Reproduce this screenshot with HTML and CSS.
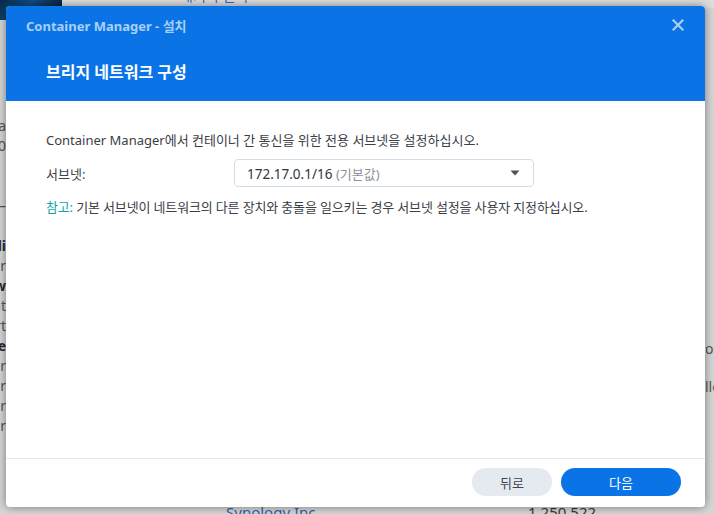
FILE: index.html
```html
<!DOCTYPE html>
<html lang="ko">
<head>
  <meta charset="UTF-8" />
  <title>Container Manager - 설치</title>
  <link rel="stylesheet" href="styles.css">
</head>
<body>
  <div class="desktop">
    <div class="desk-top">
      <div class="wallpaper"></div>
      <span class="top-link">패키지 센터</span>
    </div>
    <div class="desk-mid">
      <div class="left-col">
        <div class="row">Docker Managla</div>
        <div class="row">v20.10</div>
        <div class="row"></div>
        <div class="row">&nbsp;</div>
        <div class="row">——</div>
        <div class="row"></div>
        <div class="row bold">Detaili</div>
        <div class="row">Manager</div>
        <div class="row bold">New</div>
        <div class="row">Content</div>
        <div class="row">Support</div>
        <div class="row bold">Package</div>
        <div class="row">Server</div>
        <div class="row">Monitor</div>
        <div class="row">Center</div>
        <div class="row">Folder</div>
      </div>
      <div class="right-col">
        <div class="row r1">on</div>
        <div class="row r2">lle</div>
      </div>
    </div>
    <div class="desk-bottom">
      <span class="vendor">Synology Inc.</span>
      <span class="count">1,250,522</span>
    </div>
  </div>

  <div class="dialog">
    <div class="dialog-head">
      <div class="head-bar">
        <span class="app-title">Container Manager - 설치</span>
        <span class="close">
          <svg width="12" height="12" viewBox="0 0 12 12"><path d="M1.5 1.5 L10.5 10.5 M10.5 1.5 L1.5 10.5" stroke="#a9cff7" stroke-width="2.2" stroke-linecap="square"/></svg>
        </span>
      </div>
      <div class="step-title">브리지 네트워크 구성</div>
    </div>

    <div class="dialog-body">
      <p class="intro">Container Manager에서 컨테이너 간 통신을 위한 전용 서브넷을 설정하십시오.</p>
      <div class="field">
        <label class="field-label">서브넷:</label>
        <div class="select">
          <span class="value">172.17.0.1/16 <span class="hint">(기본값)</span></span>
          <svg class="caret" width="10" height="6" viewBox="0 0 10 6"><path d="M0.5 0.5 H9.5 L5 5.5 Z" fill="#4a5360"/></svg>
        </div>
      </div>
      <p class="note"><span class="note-tag">참고:</span> 기본 서브넷이 네트워크의 다른 장치와 충돌을 일으키는 경우 서브넷 설정을 사용자 지정하십시오.</p>
    </div>

    <div class="dialog-foot">
      <button class="btn btn-back">뒤로</button>
      <button class="btn btn-next">다음</button>
    </div>
  </div>
</body>
</html>
```

FILE: styles.css
```css
* {
  box-sizing: border-box;
}

html, body {
  margin: 0;
  height: 100%;
}

body {
  font-family: "Noto Sans", "Noto Sans CJK KR", sans-serif;
  font-size: 13px;
  color: #3a4048;
  background: #d6d6d6;
  overflow: hidden;
  position: relative;
}

/* dimmed page behind the wizard */
.desktop {
  height: 100%;
  display: flex;
  flex-direction: column;
  color: #555;
}

.desk-top {
  height: 8px;
  display: flex;
  align-items: flex-start;
  background: #dedede;
}

.wallpaper {
  width: 62px;
  height: 20px;
  background: linear-gradient(135deg, #0a2a4a 0%, #0e4e86 40%, #0b2f52 70%, #061a30 100%);
}

.top-link {
  margin-left: 118px;
  margin-top: -15px;
  color: #2f6cc0;
  font-size: 14px;
}

.desk-mid {
  flex: 1;
  display: flex;
  justify-content: space-between;
}

.left-col {
  width: 6px;
  overflow: hidden;
  padding-top: 108px;
  display: flex;
  flex-direction: column;
  align-items: flex-end;
}

.left-col .row {
  height: 20px;
  line-height: 20px;
  font-size: 14px;
  white-space: nowrap;
}

.bold {
  font-weight: bold;
  color: #2a2a2a;
}

.right-col {
  width: 8px;
  overflow: hidden;
  display: flex;
  flex-direction: column;
  align-items: flex-start;
}

.right-col .row {
  font-size: 14px;
  white-space: nowrap;
  line-height: 20px;
  margin-left: -1px;
}

.right-col .r1 {
  margin-top: 331px;
}

.right-col .r2 {
  margin-top: 18px;
}

.desk-bottom {
  height: 10px;
  position: relative;
  font-size: 15px;
  line-height: 20px;
  white-space: nowrap;
}

.desk-bottom .vendor,
.desk-bottom .count {
  position: absolute;
  top: -2px;
}

.vendor {
  left: 226px;
  color: #2e62aa;
}

.count {
  left: 528px;
  color: #3a3a3a;
}

/* wizard window */
.dialog {
  position: absolute;
  left: 6px;
  top: 6px;
  width: 699px;
  height: 501px;
  background: #fff;
  border-radius: 4px;
  box-shadow: 0 0 10px rgba(0, 0, 0, 0.45);
  display: flex;
  flex-direction: column;
  overflow: hidden;
}

.dialog-head {
  height: 95px;
  background: #0a74e6;
  padding: 0 20px;
}

.head-bar {
  height: 38px;
  display: flex;
  align-items: center;
  justify-content: space-between;
}

.app-title {
  font-weight: bold;
  font-size: 13px;
  color: #a9cff7;
}

.close {
  display: flex;
  margin-right: 1px;
}

.step-title {
  margin-top: 15px;
  padding-left: 20px;
  font-size: 16px;
  font-weight: bold;
  color: #fff;
}

.dialog-body {
  flex: 1;
  padding: 29px 40px 0;
}

.intro {
  margin: 0;
  line-height: 20px;
}

.field {
  display: flex;
  align-items: center;
  margin-top: 9px;
}

.field-label {
  width: 188px;
}

.select {
  width: 300px;
  height: 28px;
  border: 1px solid #d3dce6;
  border-radius: 4px;
  padding: 0 12px;
  display: flex;
  align-items: center;
  justify-content: space-between;
}

.value {
  font-size: 13.5px;
  color: #2f353c;
}

.hint {
  color: #8a929b;
  font-size: 13px;
}

.caret {
  margin-right: 1px;
}

.note {
  margin: 10px 0 0;
  line-height: 20px;
  font-size: 13px;
  letter-spacing: -0.15px;
}

.note-tag {
  color: #13a3a3;
}

.dialog-foot {
  height: 49px;
  border-top: 1px solid #e3e9ef;
  display: flex;
  justify-content: flex-end;
  align-items: flex-start;
  gap: 9px;
  padding: 9px 24px 0 0;
}

.btn {
  height: 28px;
  border: none;
  border-radius: 14px;
  font-family: inherit;
  font-size: 13px;
  cursor: pointer;
}

.btn-back {
  width: 80px;
  background: #e5eaf0;
  color: #3f4750;
}

.btn-next {
  width: 120px;
  background: #0a74e6;
  color: #fff;
}
```
